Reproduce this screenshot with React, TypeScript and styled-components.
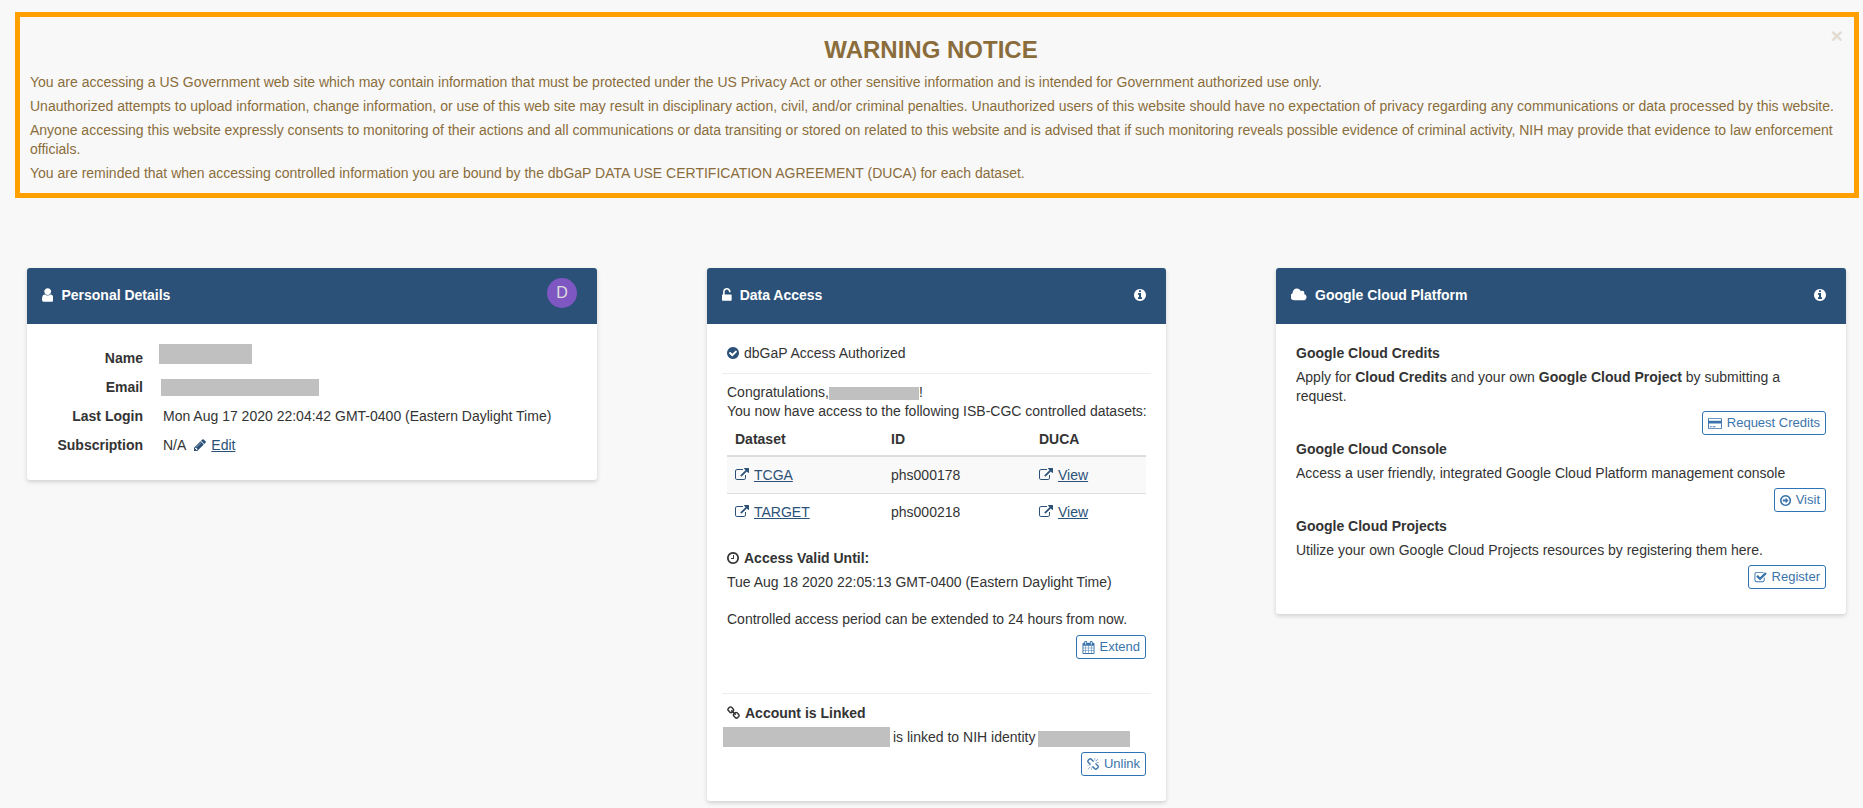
import styled, { createGlobalStyle } from 'styled-components';

const GlobalStyle = createGlobalStyle`
  html, body {
    margin: 0;
    padding: 0;
    background: #f8f8f8;
    color: #333;
    font-family: "Liberation Sans", Arial, sans-serif;
    font-size: 14px;
    line-height: 20px;
  }
  * { box-sizing: border-box; }
`;

// glyphs of the icon font the page uses: [viewBox, path]
const glyphs = {
  user: ['256 0 1280 1792', 'M1536 1399q0 109-62.500 187t-150.500 78h-854q-88 0-150.500-78t-62.500-187q0-85 8.500-160.500t31.500-152 58.500-131 94-89 134.500-34.500q131 128 313 128t313-128q76 0 134.500 34.500t94 89 58.500 131 31.500 152 8.500 160.500zm-256-887q0 159-112.500 271.500t-271.500 112.500-271.500-112.500-112.500-271.500 112.500-271.500 271.500-112.500 271.500 112.500 112.500 271.500z'],
  unlock: ['320 0 1152 1792', 'M1376 768q40 0 68 28t28 68v576q0 40-28 68t-68 28h-960q-40 0-68-28t-28-68v-576q0-40 28-68t68-28h32v-320q0-185 131.500-316.500t316.500-131.500 316.500 131.500 131.500 316.500q0 26-19 45t-45 19h-64q-26 0-45-19t-19-45q0-106-75-181t-181-75-181 75-75 181v320h736z'],
  cloud: ['0 0 1920 1792', 'M1856 1088q0 159-112.500 271.500t-271.500 112.500h-1088q-185 0-316.500-131.500t-131.500-316.500q0-132 71-241.500t187-163.500q-2-28-2-43 0-212 150-362t362-150q158 0 286.500 88t187.500 230q70-62 166-62 106 0 181 75t75 181q0 75-41 138 129 30 213 134.500t84 239.500z'],
  info: ['128 0 1536 1792', 'M1152 1376v-160q0-14-9-23t-23-9h-96v-512q0-14-9-23t-23-9h-320q-14 0-23 9t-9 23v160q0 14 9 23t23 9h96v320h-96q-14 0-23 9t-9 23v160q0 14 9 23t23 9h448q14 0 23-9t9-23zm-128-896v-160q0-14-9-23t-23-9h-192q-14 0-23 9t-9 23v160q0 14 9 23t23 9h192q14 0 23-9t9-23zm640 416q0 209-103 385.500t-279.500 279.500-385.500 103-385.500-103-279.500-279.500-103-385.500 103-385.500 279.500-279.500 385.500-103 385.500 103 279.500 279.500 103 385.500z'],
  check: ['128 0 1536 1792', 'M1412 734q0-28-18-46l-91-90q-19-19-45-19t-45 19l-408 407-226-226q-19-19-45-19t-45 19l-91 90q-18 18-18 46 0 27 18 45l362 362q19 19 45 19 27 0 46-19l543-543q18-18 18-45zm252 162q0 209-103 385.500t-279.500 279.500-385.500 103-385.500-103-279.500-279.500-103-385.500 103-385.500 279.500-279.500 385.500-103 385.500 103 279.500 279.500 103 385.500z'],
  clock: ['128 0 1536 1792', 'M1024 544v448q0 14-9 23t-23 9h-320q-14 0-23-9t-9-23v-64q0-14 9-23t23-9h224v-352q0-14 9-23t23-9h64q14 0 23 9t9 23zm416 352q0-148-73-273t-198-198-273-73-273 73-198 198-73 273 73 273 198 198 273 73 273-73 198-198 73-273zm224 0q0 209-103 385.500t-279.500 279.500-385.500 103-385.500-103-279.500-279.500-103-385.500 103-385.500 279.500-279.500 385.500-103 385.500 103 279.500 279.500 103 385.500z'],
  pencil: ['128 0 1536 1792', 'M491 1536l91-91-235-235-91 91v107h128v128h107zm523-928q0-22-22-22-10 0-17 7l-542 542q-7 7-7 17 0 22 22 22 10 0 17-7l542-542q7-7 7-17zm-54-192l416 416-832 832h-416v-416zm683 96q0 53-37 90l-166 166-416-416 166-165q36-38 90-38 53 0 91 38l235 234q37 39 37 91z'],
  external: ['0 0 1792 1792', 'M1408 928v320q0 119-84.500 203.500t-203.500 84.500h-832q-119 0-203.500-84.500t-84.500-203.500v-832q0-119 84.500-203.500t203.500-84.500h704q14 0 23 9t9 23v64q0 14-9 23t-23 9h-704q-66 0-113 47t-47 113v832q0 66 47 113t113 47h832q66 0 113-47t47-113v-320q0-14 9-23t23-9h64q14 0 23 9t9 23zm384-864v512q0 26-19 45t-45 19-45-19l-176-176-652 652q-10 10-23 10t-23-10l-114-114q-10-10-10-23t10-23l652-652-176-176q-19-19-19-45t19-45 45-19h512q26 0 45 19t19 45z'],
  calendar: ['0 0 1664 1792', 'M192 1664h288v-288h-288v288zm352 0h320v-288h-320v288zm-352-352h288v-320h-288v320zm352 0h320v-320h-320v320zm-352-384h288v-288h-288v288zm736 736h320v-288h-320v288zm-384-736h320v-288h-320v288zm768 736h288v-288h-288v288zm-384-352h320v-320h-320v320zm-352-864v-288q0-13-9.500-22.500t-22.500-9.500h-64q-13 0-22.500 9.500t-9.500 22.500v288q0 13 9.500 22.500t22.500 9.500h64q13 0 22.500-9.500t9.500-22.500zm736 864h288v-320h-288v320zm-384-384h320v-288h-320v288zm384 0h288v-288h-288v288zm32-480v-288q0-13-9.500-22.500t-22.500-9.500h-64q-13 0-22.500 9.500t-9.500 22.500v288q0 13 9.500 22.500t22.500 9.500h64q13 0 22.500-9.500t9.500-22.500zm384-64v1280q0 52-38 90t-90 38h-1408q-52 0-90-38t-38-90v-1280q0-52 38-90t90-38h128v-96q0-66 47-113t113-47h64q66 0 113 47t47 113v96h384v-96q0-66 47-113t113-47h64q66 0 113 47t47 113v96h128q52 0 90 38t38 90z'],
  link: ['0 0 1664 1792', 'M1456 1216q0-40-28-68l-208-208q-28-28-68-28-42 0-72 32 3 3 19 18.500t21.500 21.500 15 19 13 25.500 3.500 27.500q0 40-28 68t-68 28q-15 0-27.500-3.500t-25.500-13-19-15-21.500-21.500-18.500-19q-33 31-33 73 0 40 28 68l206 207q27 27 68 27 40 0 68-26l147-146q28-28 28-67zm-703-705q0-40-28-68l-206-207q-28-28-68-28-39 0-68 27l-147 146q-28 28-28 67 0 40 28 68l208 208q27 27 68 27 42 0 72-31-3-3-19-18.500t-21.500-21.500-15-19-13-25.500-3.500-27.500q0-40 28-68t68-28q15 0 27.500 3.500t25.500 13 19 15 21.500 21.500 18.500 19q33-31 33-73zm895 705q0 120-85 203l-147 146q-83 83-203 83-121 0-204-85l-206-207q-83-83-83-203 0-123 88-209l-88-88q-86 88-208 88-120 0-204-84l-208-208q-84-84-84-204t85-203l147-146q83-83 203-83 121 0 204 85l206 207q83 83 83 203 0 123-88 209l88 88q86-88 208-88 120 0 204 84l208 208q84 84 84 204z'],
  unlink: ['0 0 1664 1792', 'M439 1271l-256 256q-11 9-23 9t-23-9q-9-10-9-23t9-23l256-256q10-9 23-9t23 9q9 10 9 23t-9 23zm169 41v320q0 14-9 23t-23 9-23-9-9-23v-320q0-14 9-23t23-9 23 9 9 23zm-224-224q0 14-9 23t-23 9h-320q-14 0-23-9t-9-23 9-23 23-9h320q14 0 23 9t9 23zm1264 128q0 120-85 203l-147 146q-83 83-203 83-121 0-204-85l-334-335q-21-21-42-56l239-18 273 274q27 27 68 27.500t68-26.500l147-146q28-28 28-67 0-40-28-68l-274-275 18-239q35 21 56 42l336 336q84 86 84 204zm-617-724l-239 18-273-274q-28-28-68-28-39 0-68 27l-147 146q-28 28-28 67 0 40 28 68l274 274-18 240q-35-21-56-42l-336-336q-84-86-84-204 0-120 85-203l147-146q83-83 203-83 121 0 204 85l334 335q21 21 42 56zm633 84q0 14-9 23t-23 9h-320q-14 0-23-9t-9-23 9-23 23-9h320q14 0 23 9t9 23zm-544-544v320q0 14-9 23t-23 9-23-9-9-23v-320q0-14 9-23t23-9 23 9 9 23zm407 151l-256 256q-11 9-23 9t-23-9q-9-10-9-23t9-23l256-256q10-9 23-9t23 9q9 10 9 23t-9 23z'],
  card: ['0 0 1920 1792', 'M1760 128q66 0 113 47t47 113v1216q0 66-47 113t-113 47h-1600q-66 0-113-47t-47-113v-1216q0-66 47-113t113-47h1600zm-1600 128q-13 0-22.500 9.500t-9.500 22.500v224h1664v-224q0-13-9.500-22.500t-22.500-9.500h-1600zm1600 1280q13 0 22.500-9.500t9.500-22.500v-608h-1664v608q0 13 9.500 22.500t22.500 9.500h1600zm-1504-128v-128h256v128h-256zm384 0v-128h384v128h-384z'],
  arrowCircle: ['128 0 1536 1792', 'M1280 896q0 14-9 23l-320 320q-9 9-23 9-13 0-22.500-9.500t-9.500-22.500v-192h-352q-13 0-22.500-9.500t-9.500-22.500v-192q0-13 9.500-22.500t22.500-9.500h352v-192q0-14 9-23t23-9q12 0 24 10l319 319q9 9 9 23zm160 0q0-148-73-273t-198-198-273-73-273 73-198 198-73 273 73 273 198 198 273 73 273-73 198-198 73-273zm224 0q0 209-103 385.500t-279.500 279.500-385.500 103-385.500-103-279.500-279.500-103-385.500 103-385.500 279.500-279.500 385.500-103 385.500 103 279.500 279.500 103 385.500z'],
  checkSquare: ['0 0 1792 1792', 'M1472 930v318q0 119-84.500 203.500t-203.500 84.500h-832q-119 0-203.500-84.500t-84.500-203.500v-832q0-119 84.500-203.500t203.500-84.500h832q63 0 117 25 15 7 18 23 3 17-9 29l-49 49q-10 10-23 10-3 0-9-2-23-6-45-6h-832q-66 0-113 47t-47 113v832q0 66 47 113t113 47h832q66 0 113-47t47-113v-254q0-13 9-22l64-64q10-10 23-10 6 0 12 3 20 8 20 29zm231-489l-814 814q-24 24-57 24t-57-24l-430-430q-24-24-24-57t24-57l110-110q24-24 57-24t57 24l263 263 647-647q24-24 57-24t57 24l110 110q24 24 24 57t-24 57z'],
};

const Svg = styled.svg<{ $aspect: number; $size?: number; $color?: string }>`
  flex: none;
  height: ${(p) => p.$size ?? 14}px;
  width: ${(p) => (p.$size ?? 14) * p.$aspect}px;
  fill: ${(p) => p.$color ?? 'currentColor'};
`;

const Icon = ({ name, size, color }: { name: keyof typeof glyphs; size?: number; color?: string }) => {
  const [viewBox, d] = glyphs[name];
  const aspect = Number(viewBox.split(' ')[2]) / 1792;
  return (
    <Svg viewBox={viewBox} $aspect={aspect} $size={size} $color={color}>
      <path d={d} />
    </Svg>
  );
};

const Page = styled.div`
  height: 808px;
  overflow: hidden;
  padding-top: 12px;
`;

const Banner = styled.div`
  position: relative;
  margin: 0 4px 0 15px;
  padding: 15px 10px 10px 10px;
  border: 5px solid #ffa000;
  color: #8a6d3b;
`;

const BannerTitle = styled.h2`
  margin: 0 0 5px;
  padding-right: 12px;
  font-size: 24px;
  line-height: 36px;
  font-weight: 700;
  text-align: center;
`;

const BannerText = styled.p`
  margin: 0 0 5px;
  line-height: 19px;
  &:last-child { margin-bottom: 0; }
`;

const CloseMark = styled.span`
  position: absolute;
  top: 8px;
  right: 11px;
  font-size: 21px;
  line-height: 21px;
  font-weight: 700;
  color: #8a6d3b;
  opacity: 0.2;
`;

const Columns = styled.div`
  display: grid;
  grid-template-columns: 570px 459px 570px;
  column-gap: 110px;
  align-items: start;
  margin-top: 70px;
  padding-left: 27px;
`;

const Card = styled.section`
  background: #fff;
  border-radius: 3px;
  box-shadow: 0 2px 4px rgba(0, 0, 0, 0.16);
`;

const CardHeader = styled.header`
  display: flex;
  align-items: flex-start;
  height: 56px;
  padding: 17px 15px 0;
  background: #2c5178;
  border-radius: 3px 3px 0 0;
  color: #fff;
  font-weight: 700;
`;

const HeaderIcon = styled.span`
  display: inline-flex;
  align-items: center;
  height: 20px;
  margin-right: 8px;
`;

const HeaderTitle = styled.span`
  flex: 1;
`;

const InfoMark = styled.span`
  display: inline-flex;
  align-items: center;
  height: 20px;
  margin-right: 5px;
`;

const Avatar = styled.span`
  display: flex;
  align-items: center;
  justify-content: center;
  width: 30px;
  height: 30px;
  margin: -7px 5px 0 0;
  border-radius: 50%;
  background: #7e57c2;
  color: #ddd;
  font-weight: 400;
  font-size: 16px;
`;

const DetailsGrid = styled.dl`
  display: grid;
  grid-template-columns: 116px 1fr;
  grid-auto-rows: 29px;
  column-gap: 20px;
  align-items: center;
  margin: 0;
  padding: 19px 0 21px;
`;

const DetailLabel = styled.dt`
  font-weight: 700;
  text-align: right;
`;

const DetailValue = styled.dd`
  display: flex;
  align-items: center;
  margin: 0;
`;

const Redacted = styled.span<{ $w: number; $h: number; $mx?: number; $my?: number }>`
  display: inline-block;
  width: ${(p) => p.$w}px;
  height: ${(p) => p.$h}px;
  margin-left: ${(p) => p.$mx ?? 0}px;
  margin-top: ${(p) => p.$my ?? 0}px;
  background: #c0c0c0;
  vertical-align: middle;
`;

const TextLink = styled.a`
  color: #2c5178;
  text-decoration: underline;
`;

const EditIcon = styled.span`
  display: inline-flex;
  color: #2c5178;
  margin: 0 5px 0 8px;
`;

const CardBody = styled.div`
  padding: 19px 15px 25px;
`;

const Section = styled.div<{ $top?: number }>`
  padding: ${(p) => p.$top ?? 0}px 5px 0;
`;

const StatusLine = styled.div`
  display: flex;
  align-items: center;
  gap: 5px;
  padding-bottom: 10px;
`;

const Divider = styled.hr<{ $top?: number }>`
  margin: ${(p) => p.$top ?? 0}px 0 0;
  border: 0;
  border-top: 1px solid #eee;
`;

const Line = styled.div`
  white-space: nowrap;
  line-height: 19px;
`;

const SectionHead = styled.div<{ $top?: number }>`
  display: flex;
  align-items: center;
  gap: 5px;
  margin-top: ${(p) => p.$top ?? 0}px;
  font-weight: 700;
`;

const DatasetTable = styled.table`
  width: 100%;
  margin-top: 1px;
  border-collapse: collapse;
  table-layout: fixed;
`;

const Th = styled.th<{ $w: number }>`
  width: ${(p) => p.$w}px;
  padding: 7px 8px 6px;
  border-bottom: 2px solid #ddd;
  text-align: left;
  font-weight: 700;
`;

const Tr = styled.tr`
  &:nth-child(odd) { background: #f9f9f9; }
`;

const Td = styled.td`
  padding: 8px;
  border-top: 1px solid #ddd;
  tr:first-child > & { border-top: 0; }
`;

const CellLink = styled.span`
  display: flex;
  align-items: center;
  gap: 5px;
`;

const ActionRow = styled.div<{ $top?: number }>`
  display: flex;
  justify-content: flex-end;
  margin-top: ${(p) => p.$top ?? 5}px;
`;

const ActionButton = styled.a`
  display: inline-flex;
  align-items: center;
  gap: 5px;
  height: 24px;
  padding: 0 5px;
  border: 1px solid #2e74b5;
  border-radius: 3px;
  color: #3a74ab;
  font-size: 13px;
  line-height: 20px;
  background: #fff;
`;

const MixedLine = styled.div`
  display: flex;
  align-items: flex-start;
  height: 20px;
  margin-top: 4px;
`;

const MixedText = styled.span`
  margin: 0 3px;
`;

const GcpBody = styled.div`
  padding: 19px 20px 25px;
`;

const GcpHead = styled.div<{ $top?: number }>`
  margin-top: ${(p) => p.$top ?? 0}px;
  font-weight: 700;
`;

const BodyText = styled.p<{ $top?: number }>`
  margin: ${(p) => p.$top ?? 5}px 0 0;
  line-height: 19px;
`;

const App = () => {
  return (
    <Page>
      <GlobalStyle />
      <Banner>
        <CloseMark>×</CloseMark>
        <BannerTitle>WARNING NOTICE</BannerTitle>
        <BannerText>
          You are accessing a US Government web site which may contain information that must be protected under the US Privacy Act or other sensitive information and is intended for Government authorized use only.
        </BannerText>
        <BannerText>
          Unauthorized attempts to upload information, change information, or use of this web site may result in disciplinary action, civil, and/or criminal penalties. Unauthorized users of this website should have no expectation of privacy regarding any communications or data processed by this website.
        </BannerText>
        <BannerText>
          Anyone accessing this website expressly consents to monitoring of their actions and all communications or data transiting or stored on related to this website and is advised that if such monitoring reveals possible evidence of criminal activity, NIH may provide that evidence to law enforcement officials.
        </BannerText>
        <BannerText>
          You are reminded that when accessing controlled information you are bound by the dbGaP DATA USE CERTIFICATION AGREEMENT (DUCA) for each dataset.
        </BannerText>
      </Banner>

      <Columns>
        <Card>
          <CardHeader>
            <HeaderIcon><Icon name="user" size={16} /></HeaderIcon>
            <HeaderTitle>Personal Details</HeaderTitle>
            <Avatar>D</Avatar>
          </CardHeader>
          <DetailsGrid>
            <DetailLabel>Name</DetailLabel>
            <DetailValue><Redacted $w={93} $h={20} $mx={-4} $my={-8} /></DetailValue>
            <DetailLabel>Email</DetailLabel>
            <DetailValue><Redacted $w={158} $h={17} $mx={-2} $my={2} /></DetailValue>
            <DetailLabel>Last Login</DetailLabel>
            <DetailValue>Mon Aug 17 2020 22:04:42 GMT-0400 (Eastern Daylight Time)</DetailValue>
            <DetailLabel>Subscription</DetailLabel>
            <DetailValue>
              N/A
              <EditIcon><Icon name="pencil" /></EditIcon>
              <TextLink>Edit</TextLink>
            </DetailValue>
          </DetailsGrid>
        </Card>

        <Card>
          <CardHeader>
            <HeaderIcon><Icon name="unlock" size={15} /></HeaderIcon>
            <HeaderTitle>Data Access</HeaderTitle>
            <InfoMark><Icon name="info" /></InfoMark>
          </CardHeader>
          <CardBody>
            <Section>
              <StatusLine>
                <Icon name="check" color="#2c5178" />
                dbGaP Access Authorized
              </StatusLine>
            </Section>
            <Divider />
            <Section $top={9}>
              <Line>
                Congratulations,<Redacted $w={90} $h={13} />!
              </Line>
              <Line>You now have access to the following ISB-CGC controlled datasets:</Line>
              <DatasetTable>
                <thead>
                  <tr>
                    <Th $w={156}>Dataset</Th>
                    <Th $w={148}>ID</Th>
                    <Th $w={115}>DUCA</Th>
                  </tr>
                </thead>
                <tbody>
                  <Tr>
                    <Td><CellLink><Icon name="external" color="#2c5178" /><TextLink>TCGA</TextLink></CellLink></Td>
                    <Td>phs000178</Td>
                    <Td><CellLink><Icon name="external" color="#2c5178" /><TextLink>View</TextLink></CellLink></Td>
                  </Tr>
                  <Tr>
                    <Td><CellLink><Icon name="external" color="#2c5178" /><TextLink>TARGET</TextLink></CellLink></Td>
                    <Td>phs000218</Td>
                    <Td><CellLink><Icon name="external" color="#2c5178" /><TextLink>View</TextLink></CellLink></Td>
                  </Tr>
                </tbody>
              </DatasetTable>
              <SectionHead $top={18}>
                <Icon name="clock" />
                Access Valid Until:
              </SectionHead>
              <BodyText>Tue Aug 18 2020 22:05:13 GMT-0400 (Eastern Daylight Time)</BodyText>
              <BodyText $top={18}>Controlled access period can be extended to 24 hours from now.</BodyText>
              <ActionRow $top={6}>
                <ActionButton><Icon name="calendar" size={13} />Extend</ActionButton>
              </ActionRow>
            </Section>
            <Divider $top={34} />
            <Section $top={9}>
              <SectionHead>
                <Icon name="link" />
                Account is Linked
              </SectionHead>
              <MixedLine>
                <Redacted $w={167} $h={20} $mx={-4} />
                <MixedText>is linked to NIH identity</MixedText>
                <Redacted $w={92} $h={16} $my={4} />
              </MixedLine>
              <ActionRow>
                <ActionButton><Icon name="unlink" size={13} />Unlink</ActionButton>
              </ActionRow>
            </Section>
          </CardBody>
        </Card>

        <Card>
          <CardHeader>
            <HeaderIcon><Icon name="cloud" size={15} /></HeaderIcon>
            <HeaderTitle>Google Cloud Platform</HeaderTitle>
            <InfoMark><Icon name="info" /></InfoMark>
          </CardHeader>
          <GcpBody>
            <GcpHead>Google Cloud Credits</GcpHead>
            <BodyText>
              Apply for <b>Cloud Credits</b> and your own <b>Google Cloud Project</b> by submitting a request.
            </BodyText>
            <ActionRow>
              <ActionButton><Icon name="card" size={13} />Request Credits</ActionButton>
            </ActionRow>
            <GcpHead $top={4}>Google Cloud Console</GcpHead>
            <BodyText>Access a user friendly, integrated Google Cloud Platform management console</BodyText>
            <ActionRow>
              <ActionButton><Icon name="arrowCircle" size={13} />Visit</ActionButton>
            </ActionRow>
            <GcpHead $top={4}>Google Cloud Projects</GcpHead>
            <BodyText>Utilize your own Google Cloud Projects resources by registering them here.</BodyText>
            <ActionRow>
              <ActionButton><Icon name="checkSquare" size={13} />Register</ActionButton>
            </ActionRow>
          </GcpBody>
        </Card>
      </Columns>
    </Page>
  );
};

export default App;
